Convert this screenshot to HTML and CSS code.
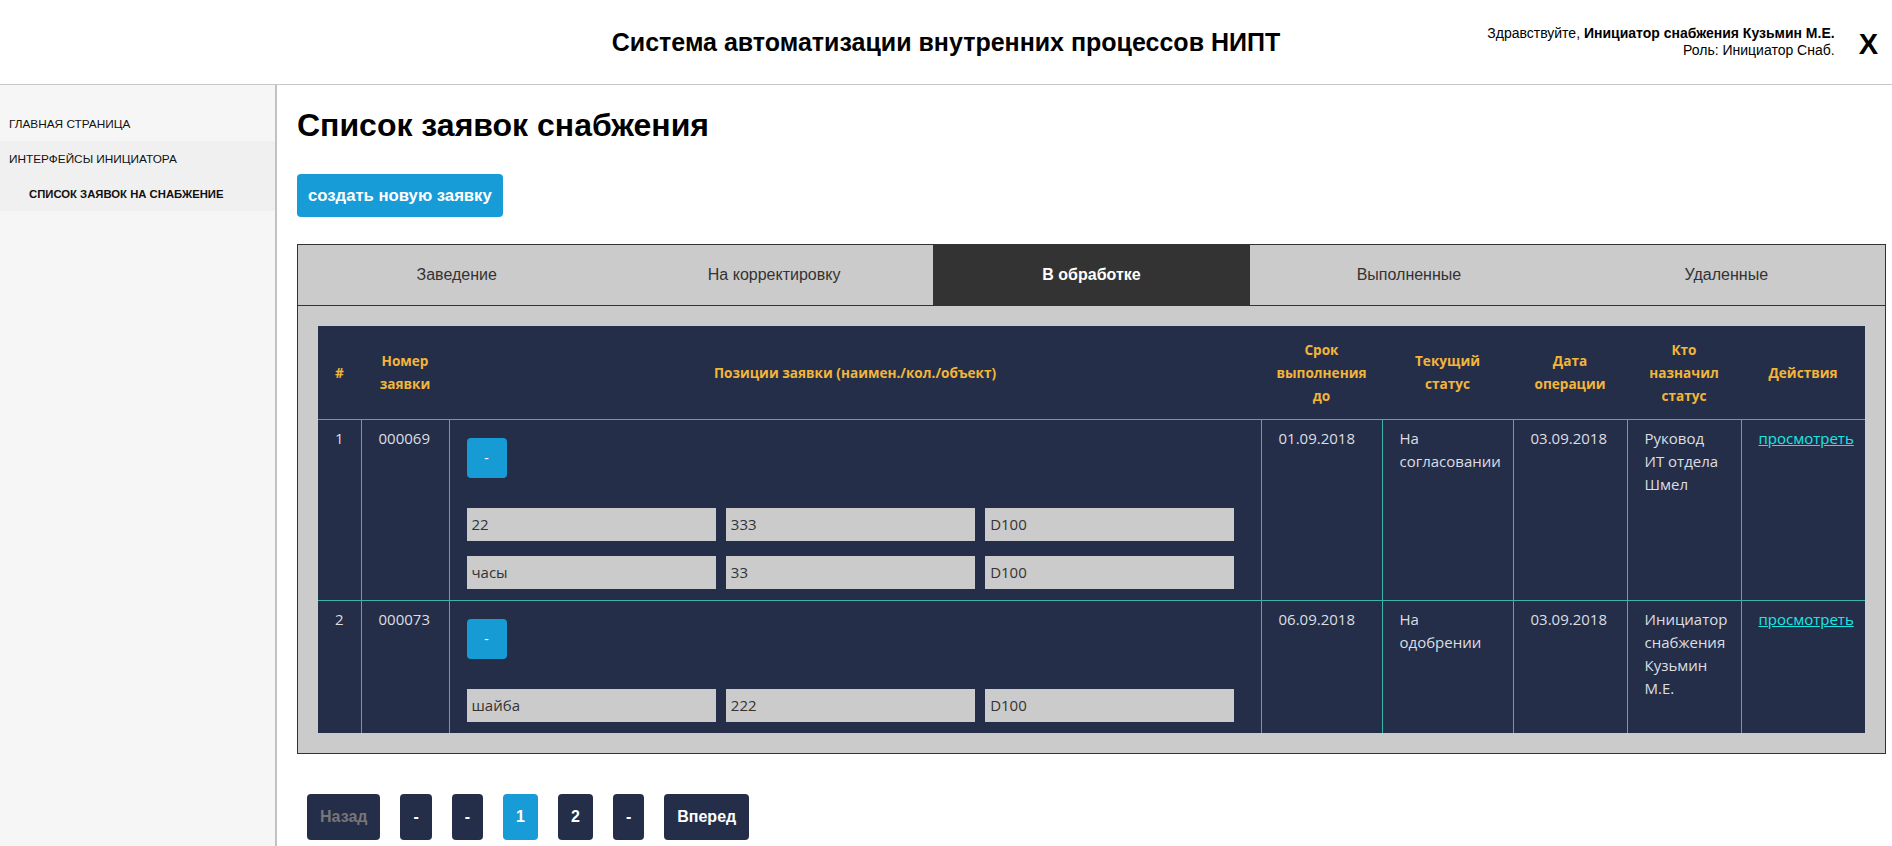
FILE: index.html
```html
<!DOCTYPE html>
<html lang="ru">
<head>
<meta charset="utf-8">
<title>Список заявок снабжения</title>
<link rel="stylesheet" href="styles.css">
</head>
<body>
<div class="page">
  <header class="topbar">
    <div class="topbar-spacer"></div>
    <div class="app-title">Система автоматизации внутренних процессов НИПТ</div>
    <div class="user">
      <div class="user-text">
        <div>Здравствуйте, <b>Инициатор снабжения Кузьмин М.Е.</b></div>
        <div>Роль: Инициатор Снаб.</div>
      </div>
      <div class="close">X</div>
    </div>
  </header>
  <div class="layout">
    <nav class="sidebar">
      <div class="nav-item">ГЛАВНАЯ СТРАНИЦА</div>
      <div class="nav-group">
        <div class="nav-item">ИНТЕРФЕЙСЫ ИНИЦИАТОРА</div>
        <div class="nav-item nav-sub">СПИСОК ЗАЯВОК НА СНАБЖЕНИЕ</div>
      </div>
    </nav>
    <main class="main">
      <h1 class="page-title">Список заявок снабжения</h1>
      <button class="btn-create">создать новую заявку</button>
      <section class="tabs-box">
        <div class="tabs">
          <div class="tab">Заведение</div>
          <div class="tab">На корректировку</div>
          <div class="tab active">В обработке</div>
          <div class="tab">Выполненные</div>
          <div class="tab">Удаленные</div>
        </div>
        <div class="tab-body">
          <table class="grid">
            <colgroup>
              <col class="c-num">
              <col class="c-id">
              <col>
              <col class="c-due">
              <col class="c-status">
              <col class="c-date">
              <col class="c-who">
              <col class="c-act">
            </colgroup>
            <thead>
              <tr>
                <th>#</th>
                <th>Номер<br>заявки</th>
                <th>Позиции заявки (наимен./кол./объект)</th>
                <th>Срок<br>выполнения<br>до</th>
                <th>Текущий<br>статус</th>
                <th>Дата<br>операции</th>
                <th>Кто<br>назначил<br>статус</th>
                <th>Действия</th>
              </tr>
            </thead>
            <tbody>
              <tr>
                <td>1</td>
                <td>000069</td>
                <td class="pos">
                  <button class="btn-toggle">-</button>
                  <div class="pos-row">
                    <input class="field" value="22" readonly>
                    <input class="field" value="333" readonly>
                    <input class="field" value="D100" readonly>
                  </div>
                  <div class="pos-row">
                    <input class="field" value="часы" readonly>
                    <input class="field" value="33" readonly>
                    <input class="field" value="D100" readonly>
                  </div>
                </td>
                <td>01.09.2018</td>
                <td>На согласовании</td>
                <td>03.09.2018</td>
                <td>Руковод ИТ отдела Шмел</td>
                <td><a href="#" class="link">просмотреть</a></td>
              </tr>
              <tr>
                <td>2</td>
                <td>000073</td>
                <td class="pos">
                  <button class="btn-toggle">-</button>
                  <div class="pos-row">
                    <input class="field" value="шайба" readonly>
                    <input class="field" value="222" readonly>
                    <input class="field" value="D100" readonly>
                  </div>
                </td>
                <td>06.09.2018</td>
                <td>На одобрении</td>
                <td>03.09.2018</td>
                <td>Инициатор снабжения Кузьмин М.Е.</td>
                <td><a href="#" class="link">просмотреть</a></td>
              </tr>
            </tbody>
          </table>
        </div>
      </section>
      <div class="pager">
        <span class="pg disabled">Назад</span>
        <span class="pg">-</span>
        <span class="pg">-</span>
        <span class="pg current">1</span>
        <span class="pg">2</span>
        <span class="pg">-</span>
        <span class="pg">Вперед</span>
      </div>
    </main>
  </div>
</div>
</body>
</html>
```

FILE: styles.css
```css
* { box-sizing: border-box; }
html, body { margin: 0; padding: 0; }
body {
  font-family: "Liberation Sans", Arial, sans-serif;
  color: #000;
  background: #fff;
  overflow: hidden;
}
.page {
  height: 100vh;
  display: flex;
  flex-direction: column;
}
.topbar {
  height: 85px;
  flex: none;
  border-bottom: 1px solid #c6c6c6;
  display: grid;
  grid-template-columns: 1fr auto 1fr;
  align-items: center;
}
.app-title {
  font-size: 25px;
  font-weight: bold;
  padding-top: 1px;
}
.user {
  justify-self: end;
  display: flex;
  align-items: center;
  padding-right: 14px;
}
.user-text {
  font-size: 14px;
  line-height: 17px;
  text-align: right;
}
.close {
  font-size: 29px;
  font-weight: bold;
  margin-left: 24px;
  line-height: 1;
  padding-top: 4px;
}
.layout {
  flex: 1;
  display: flex;
  min-height: 0;
}
.sidebar {
  width: 277px;
  flex: none;
  background: #f6f6f6;
  border-right: 2px solid #c2c2c2;
  padding-top: 21px;
}
.nav-group { background: #f0f0f0; }
.nav-item {
  height: 35px;
  display: flex;
  align-items: center;
  padding-left: 9px;
  font-size: 11.8px;
  color: #111;
}
.nav-sub {
  padding-left: 29px;
  font-size: 11.3px;
  font-weight: bold;
}
.main {
  flex: 1;
  padding: 22px 6px 0 20px;
  min-width: 0;
}
.page-title {
  margin: 0;
  font-size: 32px;
  line-height: 36px;
  font-weight: bold;
}
.btn-create {
  display: block;
  margin-top: 31px;
  height: 43px;
  padding: 0 11px;
  border: none;
  border-radius: 4px;
  background: #189cd8;
  color: #fff;
  font-family: "Liberation Sans", Arial, sans-serif;
  font-size: 16.7px;
  font-weight: bold;
}
.tabs-box {
  margin-top: 27px;
  border: 1px solid #333;
  background: #cbcbcb;
}
.tabs {
  display: flex;
  border-bottom: 1px solid #333;
}
.tab {
  flex: 1;
  height: 60px;
  display: flex;
  align-items: center;
  justify-content: center;
  font-size: 16px;
  color: #333;
}
.tab.active {
  background: #333;
  color: #fff;
  font-weight: bold;
}
.tab-body { padding: 20px; }
.grid {
  width: 100%;
  table-layout: fixed;
  border-collapse: collapse;
  background: #252e48;
  font-family: "Open Sans", "Noto Sans", sans-serif;
}
.c-num { width: 43px; }
.c-id { width: 88px; }
.c-due { width: 121px; }
.c-status { width: 131px; }
.c-date { width: 114px; }
.c-who { width: 114px; }
.c-act { width: 124px; }
.grid th {
  height: 93px;
  color: #f2b53a;
  font-size: 13.6px;
  font-weight: bold;
  line-height: 23px;
  text-align: center;
  vertical-align: middle;
  padding: 0 4px;
}
.grid tbody tr { border-top: 1px solid #3cb4a9; }
.grid td {
  vertical-align: top;
  color: #dcdee3;
  font-size: 15px;
  line-height: 23px;
  padding: 7px 17px;
  border-left: 1px solid #3cb4a9;
}
.grid td:first-child { border-left: none; }
.grid td.pos { padding: 18px 26px 11px 17px; }
.btn-toggle {
  display: block;
  width: 40px;
  height: 40px;
  border: none;
  border-radius: 4px;
  background: #169bd5;
  color: #fff;
  font-family: "Open Sans", sans-serif;
  font-size: 14px;
  padding: 0;
}
.pos-row {
  display: flex;
  gap: 10px;
  margin-top: 15px;
}
.btn-toggle + .pos-row { margin-top: 30px; }
.field {
  flex: 1;
  min-width: 0;
  height: 33px;
  border: none;
  background: #cbcbcb;
  color: #333;
  font-family: "Open Sans", sans-serif;
  font-size: 15px;
  padding: 0 5px;
}
.link {
  color: #1ae6e6;
  text-decoration: underline;
}
.pager {
  display: flex;
  gap: 20px;
  margin: 40px 0 0 10px;
}
.pg {
  height: 46px;
  padding: 0 13px;
  display: flex;
  align-items: center;
  background: #252e48;
  color: #fff;
  border-radius: 4px;
  font-size: 16px;
  font-weight: bold;
}
.pg.disabled { color: #777; }
.pg.current { background: #189cd8; }
```
